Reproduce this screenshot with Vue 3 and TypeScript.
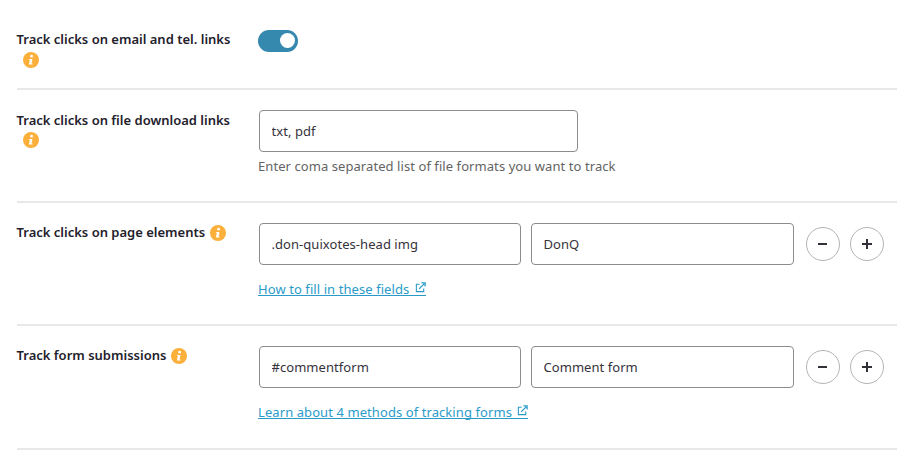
<script setup lang="ts">
interface Row {
  label: string
  wrapInfo: boolean
  kind: 'toggle' | 'single' | 'pair'
  values: string[]
  hint?: string
  link?: string
  cls: string
}
const rows: Row[] = [
  { label: 'Track clicks on email and tel. links', wrapInfo: true, kind: 'toggle', values: [], cls: 'r1' },
  { label: 'Track clicks on file download links', wrapInfo: true, kind: 'single', values: ['txt, pdf'], hint: 'Enter coma separated list of file formats you want to track', cls: 'r2' },
  { label: 'Track clicks on page elements', wrapInfo: false, kind: 'pair', values: ['.don-quixotes-head img', 'DonQ'], link: 'How to fill in these fields', cls: 'r3' },
  { label: 'Track form submissions', wrapInfo: false, kind: 'pair', values: ['#commentform', 'Comment form'], link: 'Learn about 4 methods of tracking forms', cls: 'r4' }
]
</script>

<template>
  <div class="page">
    <div v-for="row in rows" :key="row.label" class="row" :class="row.cls">
      <div class="label" :class="{ wrap: row.wrapInfo }">
        <span class="label-text">{{ row.label }}</span>
        <svg class="info" viewBox="0 0 16 16" aria-hidden="true">
          <circle cx="8" cy="8" r="8" fill="#fbb03b" />
          <circle cx="8.6" cy="4.2" r="1.4" fill="#fff" />
          <path d="M6.2 6.9h3.3l-.9 4.6h1v1.1H5.9l.9-4.6h-.8z" fill="#fff" />
        </svg>
      </div>
      <div class="control">
        <div v-if="row.kind === 'toggle'" class="toggle"><span class="knob"></span></div>
        <template v-else>
          <div class="fields">
            <input
              v-for="(v, i) in row.values"
              :key="i"
              class="input"
              :class="row.kind"
              :value="v"
              type="text"
            />
            <template v-if="row.kind === 'pair'">
              <button class="round first" type="button"><span class="minus"></span></button>
              <button class="round" type="button"><span class="plus"></span></button>
            </template>
          </div>
          <p v-if="row.hint" class="hint">{{ row.hint }}</p>
          <a v-if="row.link" class="link" href="#">
            {{ row.link }}
            <svg class="ext" viewBox="0 0 12 12" aria-hidden="true">
              <path d="M5 2.5H1.5v8h8V7" fill="none" stroke="#2a9bc9" stroke-width="1.2" />
              <path d="M4.5 7.5 10 2M7 1h4v4" fill="none" stroke="#2a9bc9" stroke-width="1.4" />
            </svg>
          </a>
        </template>
      </div>
    </div>
  </div>
</template>

<style scoped>
.page {
  width: 880px;
  margin-left: 17px;
  font-family: "Noto Sans", "Open Sans", sans-serif;
  color: #2c2a33;
}
.row {
  display: flex;
  box-sizing: border-box;
  border-bottom: 2px solid #e8e8e8;
}
.r1 { height: 90px; padding-top: 30px; }
.r2 { height: 113px; padding-top: 20px; }
.r3 { height: 123px; padding-top: 20px; }
.r4 { height: 124px; padding-top: 20px; }
.label {
  width: 241px;
  flex: none;
  margin-top: -1px;
  font-size: 13px;
  font-weight: 600;
  line-height: 20px;
  color: #23212b;
}
.r2 .label { margin-top: 0; }
.label-text { margin-left: -0.5px; }
.label.wrap .label-text { display: block; }
.label.wrap .info { display: block; margin: 3px 0 0 6px; }
.r2 .label.wrap .info { margin-top: 2px; }
.label:not(.wrap) .info { vertical-align: -4px; margin-left: 5px; }
.info {
  width: 16px;
  height: 16px;
}
.control { flex: 1; min-width: 0; }
.toggle {
  width: 40px;
  height: 22px;
  border-radius: 11px;
  background: #3588ae;
  position: relative;
}
.knob {
  position: absolute;
  right: 3px;
  top: 3px;
  width: 15px;
  height: 15px;
  border-radius: 50%;
  background: #fff;
}
.fields {
  display: flex;
  align-items: center;
  padding-left: 1px;
}
.input {
  box-sizing: border-box;
  height: 42px;
  padding: 0 12px 0 11.5px;
  border: 1px solid #8c8c8c;
  border-radius: 4px;
  background: #fff;
  font: 13px "Noto Sans", "Open Sans", sans-serif;
  letter-spacing: 0.05px;
  color: #35323c;
  outline: none;
}
.input.single { width: 319px; }
.input.pair { width: 262px; margin-right: 10px; }
.input.pair:nth-of-type(2) { width: 263px; }
.round {
  box-sizing: border-box;
  width: 34px;
  height: 34px;
  padding: 0;
  border: 1px solid #b4b4b4;
  border-radius: 50%;
  background: #fff;
  position: relative;
  margin-right: 10px;
}
.round.first { margin-left: 2px; }
.minus, .plus::before, .plus::after {
  content: "";
  position: absolute;
  background: #33303a;
}
.minus { left: 11px; top: 15px; width: 9px; height: 2px; }
.plus::before { left: 10.5px; top: 15px; width: 10px; height: 2px; }
.plus::after { left: 14.5px; top: 11px; width: 2px; height: 10px; }
.hint {
  margin: 5px 0 0;
  font-size: 13px;
  line-height: 18px;
  letter-spacing: 0.07px;
  color: #646464;
}
.link {
  display: inline-block;
  margin-top: 15px;
  font-size: 13px;
  line-height: 18px;
  letter-spacing: 0.08px;
  color: #2a9bc9;
  text-decoration: none;
  background: linear-gradient(#2a9bc9, #2a9bc9) 0 15px / 100% 1px no-repeat;
}
.ext { width: 11px; height: 11px; margin-left: 2px; vertical-align: 1px; }
</style>

<style>
html, body { background: #fff; }
</style>
